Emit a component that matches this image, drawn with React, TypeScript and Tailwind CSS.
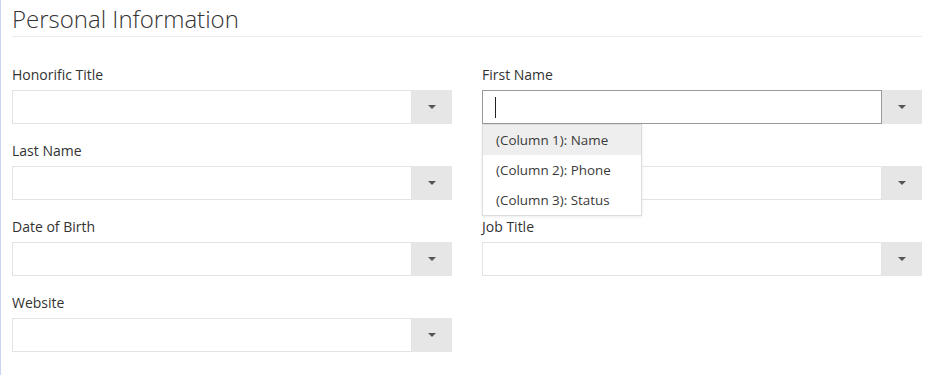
import React from 'react';

type Field = {
  label: string;
  focused?: boolean;
};

const rows: (Field | null)[][] = [
  [{ label: 'Honorific Title' }, { label: 'First Name', focused: true }],
  [{ label: 'Last Name' }, { label: '' }],
  [{ label: 'Date of Birth' }, { label: 'Job Title' }],
  [{ label: 'Website' }, null],
];

const suggestions = ['(Column 1): Name', '(Column 2): Phone', '(Column 3): Status'];

function Caret() {
  return (
    <svg width="8" height="4" viewBox="0 0 8 4" className="block">
      <path d="M0 0h8L4 4z" fill="#555" />
    </svg>
  );
}

function ComboField({ field }: { field: Field }) {
  return (
    <div className="flex flex-col">
      <div className="h-[22px] text-[14px] leading-[22px] text-[#333]">{field.label}</div>
      <div className="relative mt-[4px] flex h-[34px]">
        <div
          className={
            field.focused
              ? 'flex flex-1 items-center border border-[#999] bg-white pl-[12px]'
              : 'flex-1 border border-[#e3e3e3] bg-white'
          }
        >
          {field.focused && <div className="h-[21px] w-px bg-[#222]" />}
        </div>
        <button className="flex w-10 items-center justify-center bg-[#e6e6e6]">
          <Caret />
        </button>

        {field.focused && (
          <div className="absolute left-0 top-[34px] z-10 w-[160px] border border-[#dcdcdc] bg-white shadow-[0_1px_3px_rgba(0,0,0,0.08)]">
            {suggestions.map((s, i) => (
              <div
                key={s}
                className={
                  'h-[30px] pl-[13px] text-[13.4px] leading-[30px] text-[#3a3a3a] ' +
                  (i === 0 ? 'bg-[#eeeeee]' : 'bg-white')
                }
              >
                {s}
              </div>
            ))}
          </div>
        )}
      </div>
    </div>
  );
}

export default function App() {
  return (
    <div
      className="h-[375px] w-[926px] overflow-hidden bg-white"
      style={{ fontFamily: '"Open Sans", "Noto Sans", sans-serif' }}
    >
      <div className="h-full border-l border-[#c9d5f2] pl-[11px] pr-[4px]">
        <div className="border-b border-[#ebebeb] pt-[3px] pb-[1px]">
          <h2 className="text-[24px] font-light leading-[32px] text-[#333]">Personal Information</h2>
        </div>

        <div className="mt-[27px] flex flex-col gap-4">
          {rows.map((row, r) => (
            <div key={r} className="grid grid-cols-2 gap-[30px]">
              {row.map((f, c) => (f ? <ComboField key={c} field={f} /> : <div key={c} />))}
            </div>
          ))}
        </div>
      </div>
    </div>
  );
}
